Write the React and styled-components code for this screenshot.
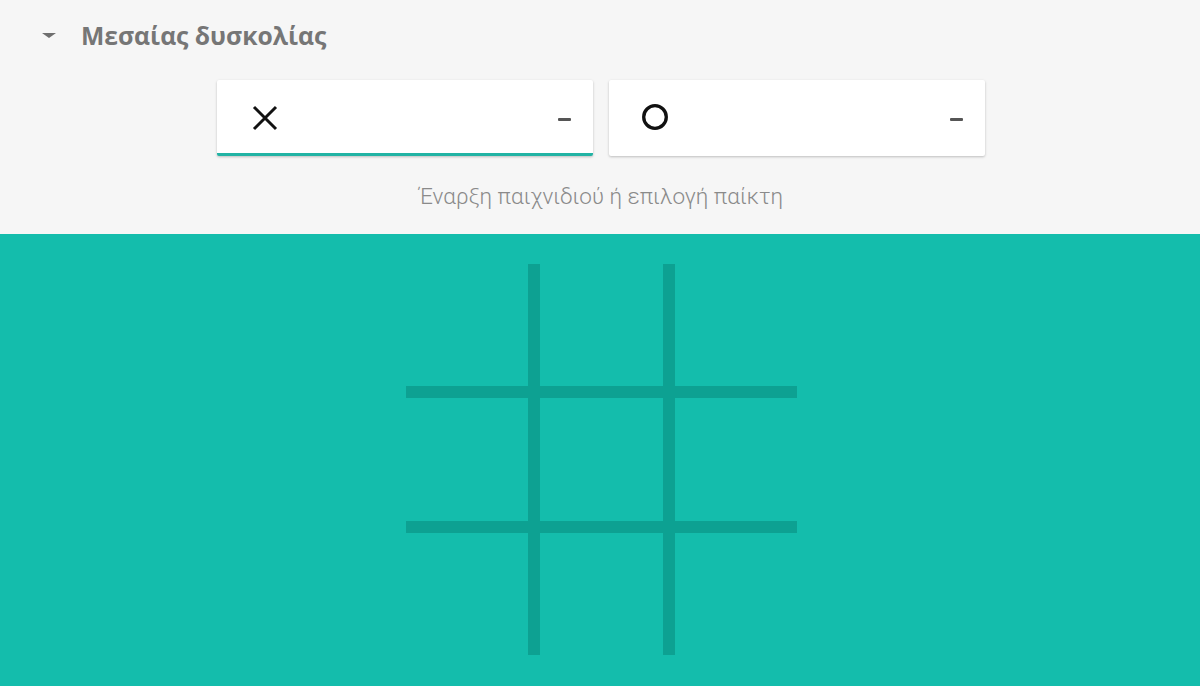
import React from "react";
import styled, { createGlobalStyle } from "styled-components";

const GlobalStyle = createGlobalStyle`
  html, body {
    margin: 0;
    padding: 0;
    background: #f6f6f6;
  }
  body {
    font-family: Roboto, "Open Sans", Arial, sans-serif;
  }
`;

const Page = styled.div`
  width: 1200px;
  height: 686px;
  overflow: hidden;
  display: flex;
  flex-direction: column;
`;

const Top = styled.div`
  background: #f6f6f6;
  height: 234px;
  display: flex;
  flex-direction: column;
`;

const Header = styled.div`
  height: 70px;
  display: flex;
  align-items: center;
  padding-left: 42px;
`;

const Caret = styled.span`
  width: 0;
  height: 0;
  border-left: 7px solid transparent;
  border-right: 7px solid transparent;
  border-top: 5px solid #6f6f6f;
  margin-right: 25px;
  margin-top: 1px;
`;

const Level = styled.span`
  font-family: "Open Sans", "Noto Sans", sans-serif;
  font-weight: 700;
  font-size: 24.7px;
  color: #767676;
`;

const Players = styled.div`
  display: flex;
  justify-content: center;
  gap: 16px;
  margin-top: 10px;
  padding-left: 2px;
`;

const PlayerCard = styled.div`
  width: 376px;
  height: 76px;
  box-sizing: border-box;
  background: #fff;
  border-radius: 2px;
  box-shadow: 0 1px 3px rgba(0, 0, 0, 0.16), 0 1px 2px rgba(0, 0, 0, 0.08);
  display: flex;
  align-items: center;
  justify-content: space-between;
  padding: 0 22px 0 ${(p) => p.$pad}px;
  border-bottom: 3px solid ${(p) => (p.$active ? "#21b3a4" : "transparent")};
`;

const Symbol = styled.svg`
  display: block;
  margin-top: ${(p) => (p.$active ? "2px" : "0")};
`;

const Score = styled.span`
  display: block;
  width: 13px;
  height: 3px;
  background: #555;
  border-radius: 1px;
  margin-top: ${(p) => (p.$active ? "5px" : "6px")};
`;

const Status = styled.div`
  text-align: center;
  margin-top: 27px;
  font-family: Roboto, Arial, sans-serif;
  font-weight: 300;
  font-size: 22.5px;
  color: #8a8a8a;
  padding-left: 2px;
`;

const Field = styled.div`
  flex: 1;
  background: #14bdac;
  display: flex;
  justify-content: center;
  padding-top: 30px;
  padding-left: 3px;
`;

const Board = styled.div`
  width: 391px;
  height: 391px;
  display: grid;
  grid-template-columns: repeat(3, 1fr);
  grid-template-rows: repeat(3, 1fr);
  gap: 12px;
  background: #0da192;
`;

const Cell = styled.div`
  background: #14bdac;
`;

const CrossIcon = (props) => (
  <Symbol width="26" height="26" viewBox="0 0 26 26" {...props}>
    <path d="M2 2 L24 24 M24 2 L2 24" stroke="#111" strokeWidth="3" fill="none" />
  </Symbol>
);

const CircleIcon = (props) => (
  <Symbol width="28" height="28" viewBox="0 0 28 28" {...props}>
    <circle cx="14" cy="14" r="11.3" stroke="#111" strokeWidth="3.3" fill="none" />
  </Symbol>
);

export default function App() {
  return (
    <Page>
      <GlobalStyle />
      <Top>
        <Header>
          <Caret />
          <Level>Μεσαίας δυσκολίας</Level>
        </Header>
        <Players>
          <PlayerCard $active $pad={35}>
            <CrossIcon $active />
            <Score $active />
          </PlayerCard>
          <PlayerCard $pad={32}>
            <CircleIcon />
            <Score />
          </PlayerCard>
        </Players>
        <Status>Έναρξη παιχνιδιού ή επιλογή παίκτη</Status>
      </Top>
      <Field>
        <Board>
          {Array.from({ length: 9 }).map((_, i) => (
            <Cell key={i} />
          ))}
        </Board>
      </Field>
    </Page>
  );
}
